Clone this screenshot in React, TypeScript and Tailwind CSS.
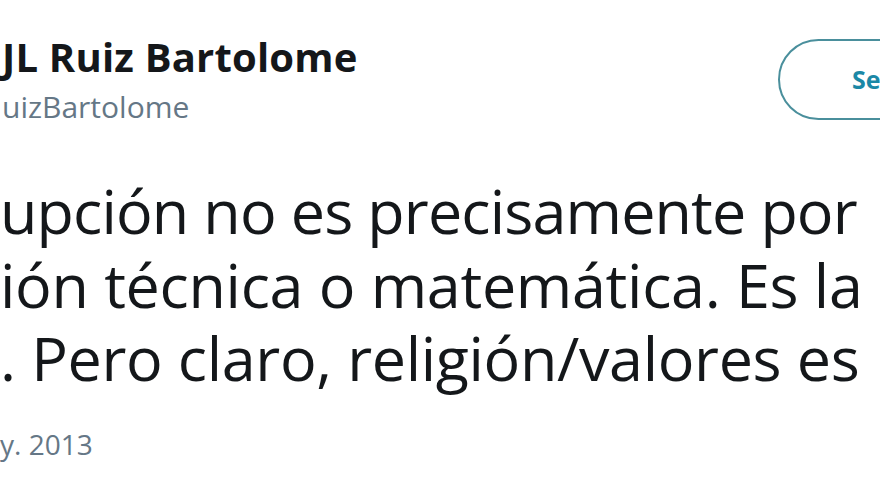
export default function App() {
  return (
    <div className="w-[880px] h-[495px] bg-white overflow-hidden font-['Open_Sans','Noto_Sans',sans-serif]">
      <div className="flex items-start justify-between">
        <div className="pl-[2px]">
          <div className="mt-[37px] text-[40px] leading-[40px] font-bold tracking-[0.2px] text-[#14171a] whitespace-nowrap">
            JL Ruiz Bartolome
          </div>
          <div className="mt-[15px] text-[30px] leading-[30px] text-[#657786] whitespace-nowrap">
            uizBartolome
          </div>
        </div>
        <button className="mt-[39px] -mr-[60px] h-[81px] w-[162px] shrink-0 rounded-full border-2 border-[#4a8f9c] pl-[72px] text-left text-[25px] font-bold text-[#1b88a6]">
          Seguir
        </button>
      </div>

      <div className="mt-[52px] text-[61px] leading-[73.5px] text-[#14171a]">
        <div className="whitespace-nowrap tracking-[-0.85px]">upción no es precisamente por</div>
        <div className="whitespace-nowrap tracking-[-0.3px]">ión técnica o matemática. Es la</div>
        <div className="whitespace-nowrap tracking-[-0.35px]">. Pero claro, religión/valores es</div>
      </div>

      <div className="mt-[35px] text-[28px] leading-[28px] text-[#657786] whitespace-nowrap">
        y. 2013
      </div>
    </div>
  );
}
